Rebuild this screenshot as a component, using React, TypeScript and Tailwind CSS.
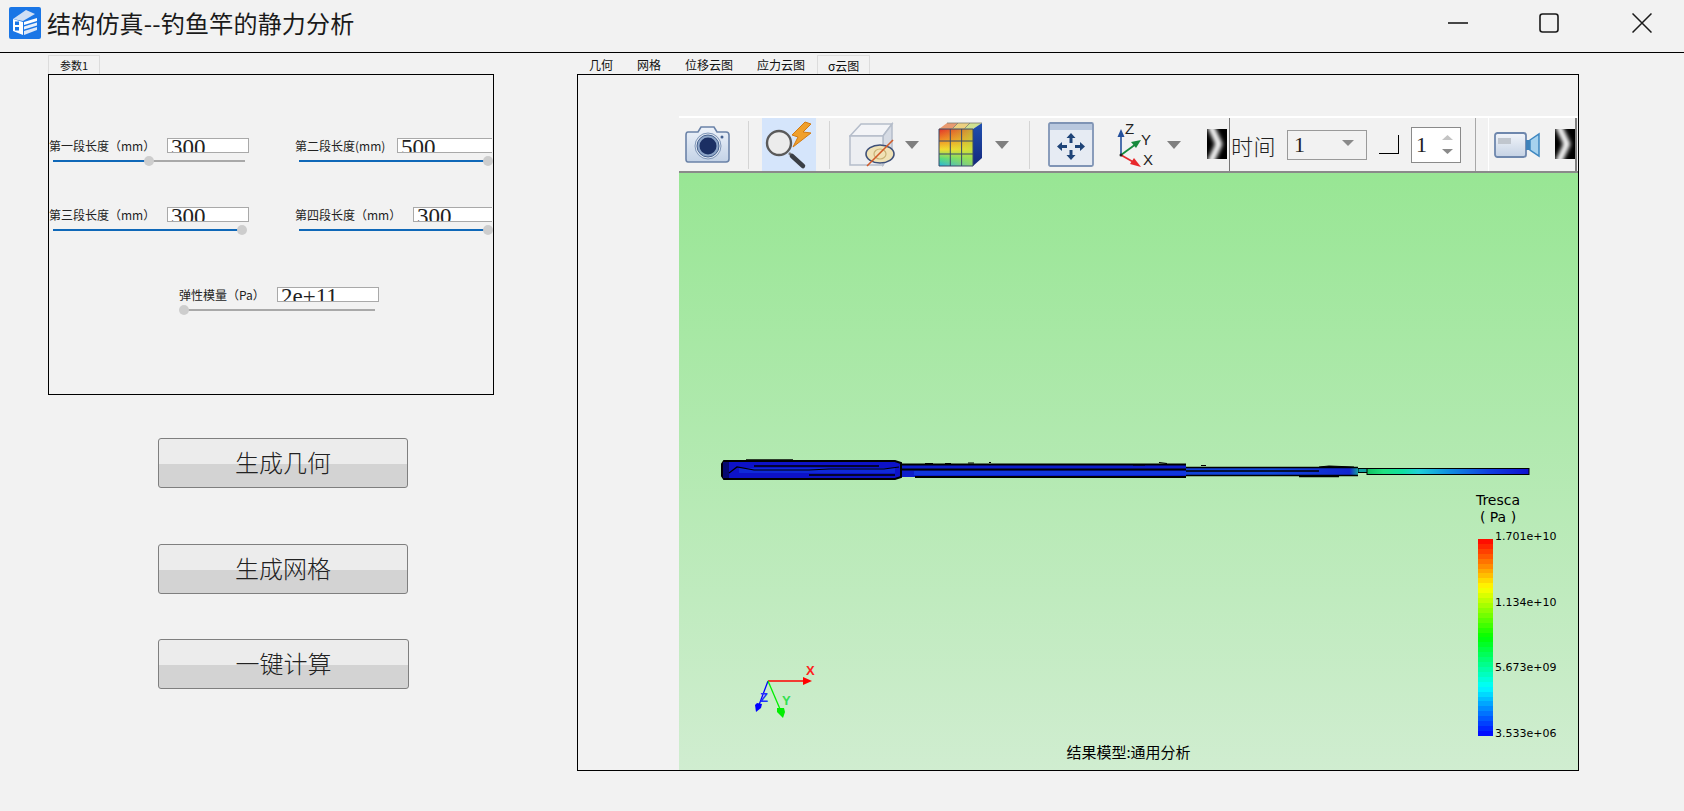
import React from "react";

const CJK = "font-['Noto_Sans_CJK_SC','Noto_Sans',sans-serif]";

function Logo() {
  return (
    <svg width="32" height="32" viewBox="0 0 32 32">
      <rect width="32" height="32" rx="2" fill="#1a76e6" />
      <polygon points="4,12 17,3 26,7 14,14" fill="#cfdff5" />
      <polygon points="4,12 14,15 14,28 4,24" fill="#ffffff" />
      <rect x="6" y="14.5" width="4" height="3.5" fill="#1a76e6" />
      <rect x="6" y="20" width="4" height="3.5" fill="#1a76e6" />
      <polygon points="15,15 28,11 28,14 15,18" fill="#ffffff" />
      <polygon points="15,19.5 28,15.5 28,18.5 15,22.5" fill="#e8f0fb" />
      <polygon points="15,24 28,20 28,23 15,28" fill="#dbe7f8" />
    </svg>
  );
}

function WinControls() {
  return (
    <div className="ml-auto flex items-center">
      <svg width="20" height="20" viewBox="0 0 20 20" className="mr-[71px]">
        <path d="M0 10h20" stroke="#1a1a1a" strokeWidth="1.6" />
      </svg>
      <svg width="20" height="20" viewBox="0 0 20 20" className="mr-[73px]">
        <rect x="1" y="1" width="18" height="18" rx="2.5" fill="none" stroke="#1a1a1a" strokeWidth="1.6" />
      </svg>
      <svg width="20" height="20" viewBox="0 0 20 20" className="mr-[32px]">
        <path d="M0.5 0.5L19.5 19.5M19.5 0.5L0.5 19.5" stroke="#1a1a1a" strokeWidth="1.5" />
      </svg>
    </div>
  );
}

function Slider({ thumb, sizeClass }: { thumb: number; sizeClass: string }) {
  return (
    <div className={`relative flex items-center h-[10px] mt-[3px] ml-[4px] ${sizeClass}`}>
      <div className="h-[2px] bg-[#0f68b8]" style={{ width: thumb }} />
      <div className="h-[2px] flex-1 bg-[#a9a9a9]" />
      <div className="absolute top-0 w-[10px] h-[10px] rounded-full bg-[#cdcdcd]" style={{ left: thumb - 5 }} />
    </div>
  );
}

function Field({
  label,
  value,
  labelClass,
  inputClass,
  sliderClass,
  thumb,
}: {
  label: string;
  value: string;
  labelClass: string;
  inputClass: string;
  sliderClass: string;
  thumb: number;
}) {
  return (
    <div>
      <div className="flex items-center h-[15px]">
        <div className={`text-[12px] leading-[15px] text-[#222] whitespace-nowrap ${labelClass}`}>{label}</div>
        <div className={`h-[15px] border border-[#a9a9a9] bg-white overflow-hidden pl-[3px] font-['Liberation_Serif',serif] text-[23px] leading-[18px] text-[#222] ${inputClass}`}>
          {value}
        </div>
      </div>
      <Slider thumb={thumb} sizeClass={sliderClass} />
    </div>
  );
}

function BigButton({ text, sizeClass, gapClass }: { text: string; sizeClass: string; gapClass: string }) {
  return (
    <div className={`ml-[110px] h-[50px] pb-[3px] flex items-center justify-center rounded-[3px] border border-[#7f7f7f] bg-[linear-gradient(#ececec_0,#ececec_53%,#d3d3d3_53%,#d3d3d3_100%)] text-[24px] font-light text-[#222] ${sizeClass} ${gapClass}`}>
      {text}
    </div>
  );
}

function CameraIcon() {
  return (
    <svg width="45" height="37" viewBox="0 0 45 37">
      <defs>
        <linearGradient id="camBody" x1="0" y1="0" x2="0" y2="1">
          <stop offset="0" stopColor="#eef3fa" />
          <stop offset="1" stopColor="#c3d2e6" />
        </linearGradient>
      </defs>
      <path d="M3 6h10l3-5h13l3 5h9q3 0 3 3v24q0 3-3 3H3q-2 0-2-3V9q0-3 2-3z" fill="url(#camBody)" stroke="#6b83a8" strokeWidth="1.6" />
      <circle cx="23" cy="20" r="13" fill="#dfe7f2" stroke="#7f96b8" strokeWidth="1" />
      <circle cx="23" cy="20" r="11" fill="#8ea6c8" stroke="#45608c" strokeWidth="1" />
      <circle cx="23" cy="20" r="8.5" fill="#1b2f63" />
      <circle cx="37" cy="11" r="1.5" fill="#44608f" />
    </svg>
  );
}

function SearchIcon() {
  return (
    <div className="ml-[13px] w-[54px] h-[53px] bg-[#d5e5fb] shrink-0">
      <svg width="54" height="53" viewBox="0 0 54 53">
        <circle cx="17" cy="25" r="12" fill="#ececec" stroke="#5a5a5a" strokeWidth="2.4" />
        <path d="M27 35l3 3" stroke="#777" strokeWidth="2.5" />
        <path d="M30 38l11 10" stroke="#3b3f46" strokeWidth="4.5" strokeLinecap="round" />
        <polygon points="43,4 30,17 36,19 31,29 49,15 41,14 49,6" fill="#f0a02c" stroke="#d27a12" strokeWidth="1" />
      </svg>
    </div>
  );
}

function HideCube() {
  return (
    <svg width="46" height="45" viewBox="0 0 46 45" className="ml-[19px] shrink-0">
      <polygon points="1,14 12,2 43,2 34,14" fill="#f3f4f7" stroke="#b5bdca" strokeWidth="1.5" />
      <polygon points="34,14 43,2 43,30 34,43" fill="#d6dbe4" stroke="#b5bdca" strokeWidth="1.5" />
      <rect x="1" y="14" width="33" height="29" fill="#eceef2" stroke="#b5bdca" strokeWidth="1.5" />
      <ellipse cx="31" cy="32" rx="14" ry="9" fill="#f0e2b6" stroke="#3e5078" strokeWidth="1.6" />
      <ellipse cx="31" cy="32" rx="6" ry="5" fill="none" stroke="#c9b276" strokeWidth="1.2" />
      <path d="M18 44L44 18" stroke="#d05a28" strokeWidth="1.6" />
    </svg>
  );
}

function ColorCube() {
  return (
    <svg width="44" height="45" viewBox="0 0 44 45" className="ml-[19px] shrink-0">
      <defs>
        <linearGradient id="ccV" x1="0" y1="0" x2="0" y2="1">
          <stop offset="0" stopColor="#e2302a" />
          <stop offset="0.3" stopColor="#f08a24" />
          <stop offset="0.55" stopColor="#f2dc30" />
          <stop offset="0.8" stopColor="#50dc80" />
          <stop offset="1" stopColor="#22b4e0" />
        </linearGradient>
        <linearGradient id="ccH" x1="0" y1="0" x2="1" y2="0">
          <stop offset="0" stopColor="#f2dc30" stopOpacity="0" />
          <stop offset="1" stopColor="#b8e040" stopOpacity="0.7" />
        </linearGradient>
        <linearGradient id="ccS" x1="0" y1="0" x2="0" y2="1">
          <stop offset="0" stopColor="#2050b0" />
          <stop offset="1" stopColor="#14287c" />
        </linearGradient>
      </defs>
      <polygon points="9,1 20,1 14,7 1,7" fill="#e89a70" />
      <polygon points="20,1 32,1 26,7 14,7" fill="#ecd080" />
      <polygon points="32,1 44,1 35,7 26,7" fill="#cfe090" />
      <polygon points="35,7 44,1 44,36 35,44" fill="url(#ccS)" />
      <rect x="1" y="7" width="34" height="37" fill="url(#ccV)" />
      <rect x="1" y="7" width="34" height="37" fill="url(#ccH)" />
      <path d="M1 7H35M1 19H35M1 32H35M1 44H35M1 7V44M12.3 7V44M23.6 7V44M35 7V44" stroke="#3a4a68" strokeWidth="1" fill="none" />
      <path d="M20 1L14 7M32 1L26 7M9 1H44" stroke="#7c7c70" strokeWidth="0.8" fill="none" />
    </svg>
  );
}

function Arrow({ cls }: { cls: string }) {
  return (
    <svg width="14" height="8" viewBox="0 0 14 8" className={`shrink-0 ${cls}`}>
      <polygon points="0,0 14,0 7,8" fill="#7f7f7f" />
    </svg>
  );
}

function Sep({ cls }: { cls: string }) {
  return <div className={`w-px h-[48px] bg-[#d4d4d4] shrink-0 ${cls}`} />;
}

function FitIcon() {
  return (
    <svg width="46" height="45" viewBox="0 0 46 45" className="ml-[18px] shrink-0">
      <rect x="1" y="1" width="44" height="43" rx="1.5" fill="#e6ebf3" stroke="#7f94b5" strokeWidth="1.8" />
      <rect x="2" y="2" width="42" height="6" fill="#b9c8de" />
      <g fill="#1f4478">
        <path d="M23 11l-4.5 5h3v5h3v-5h3z" />
        <path d="M23 38l-4.5-5h3v-5h3v5h3z" />
        <path d="M9 24.5l5-4.5v3h5v3h-5v3z" />
        <path d="M37 24.5l-5-4.5v3h-5v3h5v3z" />
      </g>
    </svg>
  );
}

function AxesIcon() {
  return (
    <svg width="40" height="47" viewBox="0 0 40 47" className="ml-[23px] shrink-0">
      <path d="M4 34V12" stroke="#24509c" strokeWidth="1.6" />
      <polygon points="4,8 0.5,16 7.5,16" fill="#24509c" />
      <path d="M4 34L19 23" stroke="#168a3c" strokeWidth="1.8" />
      <polygon points="24,19 14,21 19,27" fill="#168a3c" />
      <path d="M4 34L18 42" stroke="#e8282c" strokeWidth="1.8" />
      <polygon points="24,46 13,43 17,37" fill="#e8282c" />
      <circle cx="4" cy="34" r="1.5" fill="#222" />
      <text x="8" y="13" fontSize="15" fontFamily="'Liberation Sans',sans-serif" fill="#222">Z</text>
      <text x="24" y="24" fontSize="15" fontFamily="'Liberation Sans',sans-serif" fill="#222">Y</text>
      <text x="26" y="44" fontSize="15" fontFamily="'Liberation Sans',sans-serif" fill="#222">X</text>
    </svg>
  );
}

function Chevron({ id, cls }: { id: string; cls: string }) {
  return (
    <svg width="20" height="30" viewBox="0 0 20 30" className={`shrink-0 mb-[2px] ${cls}`}>
      <defs>
        <filter id={id} filterUnits="userSpaceOnUse" x="-10" y="-10" width="40" height="50">
          <feGaussianBlur stdDeviation="2" />
        </filter>
      </defs>
      <rect width="20" height="30" fill="#000" />
      <path d="M3 -4L12 15L3 34" fill="none" stroke="#fff" strokeWidth="6.5" filter={`url(#${id})`} />
    </svg>
  );
}

function VideoIcon() {
  return (
    <svg width="46" height="26" viewBox="0 0 46 26" className="shrink-0">
      <defs>
        <linearGradient id="vidBody" x1="0" y1="0" x2="0" y2="1">
          <stop offset="0" stopColor="#f2f5fa" />
          <stop offset="1" stopColor="#c5d2e4" />
        </linearGradient>
      </defs>
      <rect x="1" y="1" width="31" height="24" rx="2.5" fill="url(#vidBody)" stroke="#6e87ad" strokeWidth="1.8" />
      <rect x="4" y="6" width="13" height="6" fill="#c0c6ce" />
      <rect x="32" y="8" width="4" height="10" fill="#3f82ba" />
      <polygon points="36,8 45,2 45,24 36,18" fill="#a6d2ee" stroke="#3d86c0" strokeWidth="1.5" />
    </svg>
  );
}

function Toolbar() {
  return (
    <div className={`flex items-center h-[57px] shrink-0 bg-[#f2f2f2] border-t-2 border-t-white border-b-2 border-b-[#8a8a8a] ${CJK}`}>
      <div className="ml-[6px] shrink-0">
        <CameraIcon />
      </div>
      <Sep cls="ml-[18px]" />
      <SearchIcon />
      <Sep cls="ml-[13px]" />
      <HideCube />
      <Arrow cls="ml-[10px]" />
      <ColorCube />
      <Arrow cls="ml-[13px]" />
      <Sep cls="ml-[20px]" />
      <FitIcon />
      <AxesIcon />
      <Arrow cls="ml-[10px]" />
      <Chevron id="chev1" cls="ml-[26px]" />
      <div className="ml-[2px] w-px self-stretch bg-[#777] shrink-0" />
      <div className="ml-[1px] w-[45px] text-[22px] tracking-[0.5px] font-light leading-[26px] text-[#222] whitespace-nowrap shrink-0">时间</div>
      <div className="ml-[11px] w-[80px] h-[30px] border border-[#9a9a9a] bg-[#f2f2f2] flex items-center pl-[6px] pr-[12px] shrink-0 font-['Liberation_Serif',serif] text-[22px] text-[#222]">
        1
        <svg width="12" height="6" viewBox="0 0 12 6" className="ml-auto mb-[4px]">
          <polygon points="0,0 12,0 6,6" fill="#8a8a8a" />
        </svg>
      </div>
      <div className="ml-[12px] w-[20px] h-[19px] border-r border-b border-black shrink-0" />
      <div className="ml-[12px] w-[50px] h-[36px] border border-[#8a8a8a] bg-white flex items-center pl-[4px] pr-[7px] shrink-0 font-['Liberation_Serif',serif] text-[22px] text-[#222]">
        1
        <div className="ml-auto flex flex-col gap-[9px]">
          <svg width="11" height="5" viewBox="0 0 11 5">
            <polygon points="5.5,0 11,5 0,5" fill="#c4c4c4" />
          </svg>
          <svg width="11" height="5" viewBox="0 0 11 5">
            <polygon points="0,0 11,0 5.5,5" fill="#8a8a8a" />
          </svg>
        </div>
      </div>
      <div className="ml-[14px] w-px self-stretch bg-[#a8a8a8] shrink-0" />
      <div className="ml-[12px] w-[89px] self-stretch border-l border-l-white border-r-2 border-r-[#808080] flex items-center pl-[5px] shrink-0">
        <VideoIcon />
        <Chevron id="chev2" cls="ml-[15px]" />
      </div>
    </div>
  );
}

function Rod() {
  return (
    <svg className="absolute inset-0" width="899" height="598" viewBox="0 0 899 598">
      <defs>
        <linearGradient id="tip" x1="0" y1="0" x2="1" y2="0">
          <stop offset="0" stopColor="#10c060" />
          <stop offset="0.1" stopColor="#20e080" />
          <stop offset="0.22" stopColor="#10e0a0" />
          <stop offset="0.32" stopColor="#20d0d8" />
          <stop offset="0.5" stopColor="#1090e0" />
          <stop offset="0.75" stopColor="#1040e0" />
          <stop offset="1" stopColor="#1010d0" />
        </linearGradient>
        <linearGradient id="s3" x1="0" y1="0" x2="1" y2="0">
          <stop offset="0" stopColor="#1040d8" />
          <stop offset="0.5" stopColor="#1048dc" />
          <stop offset="0.95" stopColor="#1024d0" />
          <stop offset="1" stopColor="#18a0a0" />
        </linearGradient>
      </defs>
      {/* tip */}
      <rect x="679" y="295.5" width="10" height="4" fill="#10a0a0" stroke="#000" strokeWidth="1" />
      <rect x="688" y="295.5" width="162" height="6" fill="url(#tip)" stroke="#000" strokeWidth="1" />
      {/* third section */}
      <rect x="507" y="294" width="172" height="9" fill="url(#s3)" />
      <path d="M507 294.5H679M507 302.5H679M507 298H640" stroke="#000" strokeWidth="1.6" />
      <path d="M522 292.5h5M640 294l10-1 25 1" stroke="#000" strokeWidth="1.2" />
      <path d="M620 303.5h40" stroke="#000" strokeWidth="1.6" />
      {/* second section */}
      <rect x="221" y="291" width="286" height="13" fill="#0c1ecc" />
      <rect x="235" y="298" width="272" height="4" fill="#1036de" />
      <path d="M221 291.5H507M236 304H507M221 296.5H507" stroke="#000" strokeWidth="1.8" />
      <path d="M246 290.5h8M266 290.5h6M289 290h6M310 289.5h2" stroke="#000" strokeWidth="1.2" />
      <path d="M480 289.5l8 1M454 292h12" stroke="#000" strokeWidth="1.2" />
      {/* thick section */}
      <path d="M45 288H216L222 290V304L216 306H45L43 303V291Z" fill="#0d12c8" stroke="#000" strokeWidth="2" />
      <rect x="44" y="289" width="6" height="16" fill="#060a70" />
      <rect x="60" y="295" width="156" height="5" fill="#0f2ad8" />
      <path d="M67 287H114" stroke="#000" strokeWidth="1.5" />
      <path d="M50 300L58 294L75 297H130L150 296H205L220 294" fill="none" stroke="#000" strokeWidth="1.2" />
      <path d="M75 293H200M130 302H216" stroke="#000" strokeWidth="1.3" />
      {/* origin triad */}
      <path d="M89 508H126" stroke="#ff0000" strokeWidth="1.3" />
      <polygon points="133,508 124,504 124,512" fill="#ff0000" />
      <path d="M89 508L80 532" stroke="#0000ff" strokeWidth="1.3" />
      <polygon points="77,539 76,532 78,530 83,531 82,535" fill="#0000ff" />
      <path d="M89 508L101 536" stroke="#00ee00" strokeWidth="1.3" />
      <polygon points="104,545 98,539 98,535 105,535 106,539" fill="#00ee00" />
      <text x="127" y="502" fontSize="13" fontWeight="700" fontFamily="'Liberation Sans',sans-serif" fill="#ff2020">X</text>
      <text x="81" y="529" fontSize="13" fontWeight="700" fontFamily="'Liberation Sans',sans-serif" fill="#2030ff">Z</text>
      <text x="103" y="532" fontSize="13" fontWeight="700" fontFamily="'Liberation Sans',sans-serif" fill="#30e050">Y</text>
    </svg>
  );
}

function bandColor(t: number) {
  // t: 0 top (red) .. 1 bottom (blue), classic rainbow
  const s = t * 4;
  const k = s - Math.floor(s);
  const seg = Math.floor(s);
  let r = 0;
  let g = 0;
  let b = 0;
  if (seg === 0) [r, g, b] = [255, 255 * k, 0];
  else if (seg === 1) [r, g, b] = [255 * (1 - k), 255, 0];
  else if (seg === 2) [r, g, b] = [0, 255, 255 * k];
  else if (seg === 3) [r, g, b] = [0, 255 * (1 - k), 255];
  else [r, g, b] = [0, 0, 255];
  return `rgb(${Math.round(r)},${Math.round(g)},${Math.round(b)})`;
}

function Legend() {
  const bands = Array.from({ length: 40 }, (_, i) => i);
  return (
    <div className="absolute left-[794px] top-[319px] font-['DejaVu_Sans',sans-serif] text-black">
      <div className="w-[50px] text-center text-[14px] leading-[17px]">Tresca</div>
      <div className="w-[50px] text-center text-[14px] leading-[17px]">( Pa )</div>
      <div className="flex mt-[13px] ml-[5px]">
        <div className="w-[15px] h-[197px] flex flex-col">
          {bands.map((i) => (
            <div key={i} className="flex-1" style={{ background: bandColor((i + 0.5) / 40) }} />
          ))}
        </div>
        <div className="ml-[2px] h-[211px] -mt-[9px] flex flex-col justify-between text-[11px] leading-[14px]">
          <div>1.701e+10</div>
          <div>1.134e+10</div>
          <div>5.673e+09</div>
          <div>3.533e+06</div>
        </div>
      </div>
    </div>
  );
}

function Viewport() {
  return (
    <div className="relative flex-1 flex flex-col items-center justify-end bg-[linear-gradient(#98e694,#d0edd0)] overflow-hidden">
      <Rod />
      <Legend />
      <div className={`relative mb-[8px] text-[15px] leading-[20px] text-black ${CJK}`}>结果模型:通用分析</div>
    </div>
  );
}

function LeftColumn() {
  return (
    <div className="ml-[48px] w-[446px] shrink-0">
      <div className="mt-[2px] w-[52px] h-[19px] border border-b-0 border-[#dcdcdc] flex items-center justify-center text-[11px] text-[#111]">参数1</div>
      <div className="h-[321px] border border-black pt-[63px]">
        <div className="grid grid-cols-[246px_1fr]">
          <Field label="第一段长度（mm）" value="300" labelClass="w-[118px]" inputClass="w-[82px]" sliderClass="w-[192px]" thumb={96} />
          <Field label="第二段长度(mm)" value="500" labelClass="w-[102px]" inputClass="w-[95px] border-r-0" sliderClass="w-[189px]" thumb={189} />
        </div>
        <div className="grid grid-cols-[246px_1fr] mt-[41px]">
          <Field label="第三段长度（mm）" value="300" labelClass="w-[118px]" inputClass="w-[82px]" sliderClass="w-[189px]" thumb={189} />
          <Field label="第四段长度（mm）" value="300" labelClass="w-[118px]" inputClass="w-[79px] border-r-0" sliderClass="w-[189px]" thumb={189} />
        </div>
        <div className="mt-[52px] ml-[130px]">
          <Field label="弹性模量（Pa）" value="2e+11" labelClass="w-[98px]" inputClass="w-[102px]" sliderClass="w-[192px]" thumb={1} />
        </div>
      </div>
      <BigButton text="生成几何" sizeClass="w-[250px]" gapClass="mt-[43px]" />
      <BigButton text="生成网格" sizeClass="w-[250px]" gapClass="mt-[56px]" />
      <BigButton text="一键计算" sizeClass="w-[251px]" gapClass="mt-[45px]" />
    </div>
  );
}

function RightColumn() {
  return (
    <div className="ml-[83px] w-[1002px] shrink-0">
      <div className="mt-[2px] h-[19px] flex text-[12px] text-[#111]">
        <div className="px-[12px] pt-[1px] leading-[18px]">几何</div>
        <div className="px-[12px] pt-[1px] leading-[18px]">网格</div>
        <div className="px-[12px] pt-[1px] leading-[18px]">位移云图</div>
        <div className="px-[12px] pt-[1px] leading-[18px]">应力云图</div>
        <div className="w-[53px] border border-b-0 border-[#dcdcdc] text-center pt-[1px] leading-[17px]">σ云图</div>
      </div>
      <div className="h-[697px] border border-black pt-[41px] pl-[101px] flex flex-col">
        <Toolbar />
        <Viewport />
      </div>
    </div>
  );
}

export default function App() {
  return (
    <div className={`w-[1684px] h-[811px] bg-[#f2f2f2] flex flex-col overflow-hidden ${CJK}`}>
      <div className="h-[53px] shrink-0 border-b border-black flex items-center pl-[9px] pb-[6px]">
        <Logo />
        <div className="ml-[6px] text-[24px] tracking-[0.2px] leading-[32px] text-[#1a1a1a] whitespace-nowrap">结构仿真--钓鱼竿的静力分析</div>
        <WinControls />
      </div>
      <div className="flex flex-1 min-h-0">
        <LeftColumn />
        <RightColumn />
      </div>
    </div>
  );
}
